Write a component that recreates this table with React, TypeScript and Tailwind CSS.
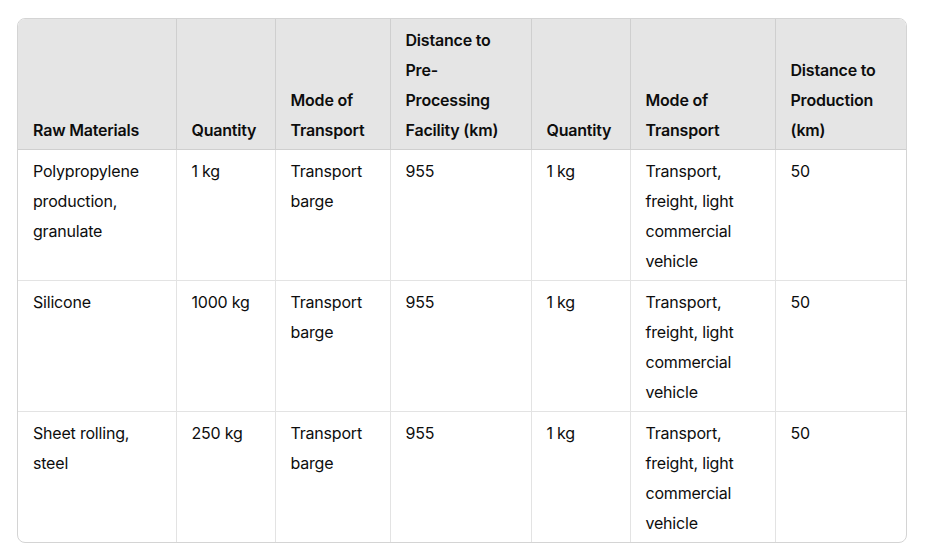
const headers = [
  "Raw Materials",
  "Quantity",
  "Mode of Transport",
  "Distance to Pre-Processing Facility (km)",
  "Quantity",
  "Mode of Transport",
  "Distance to Production (km)",
];

const rows = [
  ["Polypropylene production, granulate", "1 kg", "Transport barge", "955", "1 kg", "Transport, freight, light commercial vehicle", "50"],
  ["Silicone", "1000 kg", "Transport barge", "955", "1 kg", "Transport, freight, light commercial vehicle", "50"],
  ["Sheet rolling, steel", "250 kg", "Transport barge", "955", "1 kg", "Transport, freight, light commercial vehicle", "50"],
];

const widths = [158, 99, 115, 141, 99, 145, 131];

export default function App() {
  return (
    <div className="w-[925px] h-[555px] bg-white pt-[18px] pl-[17px]" style={{ fontFamily: "Inter, 'Noto Sans', sans-serif" }}>
      <div className="w-[890px] border border-[#d4d4d4] rounded-lg overflow-hidden">
        <table className="table-fixed border-collapse w-full text-[16px] leading-[30px] text-[#0d0d0d]">
          <colgroup>
            {widths.map((w, i) => (
              <col key={i} style={{ width: w }} />
            ))}
          </colgroup>
          <thead>
            <tr className="bg-[#e5e5e5]">
              {headers.map((h, i) => (
                <th
                  key={i}
                  className="align-bottom text-left font-semibold px-[15px] pt-[5px] pb-[4px] border-b border-[#cfcfcf] border-l first:border-l-0 h-[130px] tracking-[-0.2px]"
                >
                  {h}
                </th>
              ))}
            </tr>
          </thead>
          <tbody>
            {rows.map((r, ri) => (
              <tr key={ri}>
                {r.map((c, ci) => (
                  <td
                    key={ci}
                    className={`align-top px-[15px] pt-[6px] pb-[4px] border-l first:border-l-0 border-[#e3e3e3] h-[131px] tracking-[-0.2px] ${ri < rows.length - 1 ? "border-b" : ""}`}
                  >
                    {c}
                  </td>
                ))}
              </tr>
            ))}
          </tbody>
        </table>
      </div>
    </div>
  );
}
